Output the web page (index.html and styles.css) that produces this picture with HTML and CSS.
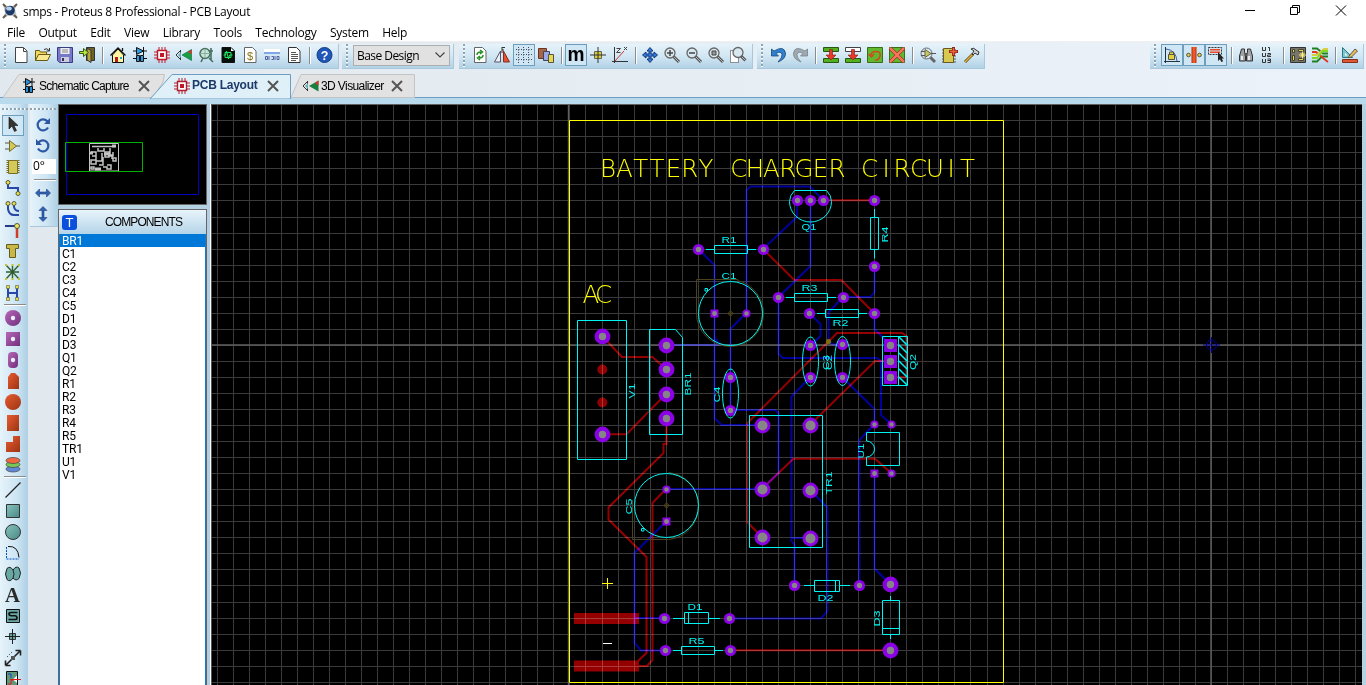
FILE: index.html
```html
<!DOCTYPE html>
<html lang="en">
<head>
<meta charset="utf-8">
<title>smps - Proteus 8 Professional - PCB Layout</title>
<link rel="stylesheet" href="styles.css">
</head>
<body>
<div class="app">
<header class="titlebar">
  <svg class="logo" viewBox="0 0 16 16"><path d="M1 1l4 2h6l4-2-2 5 1 4 1 5-5-2H6l-5 2 2-5-1-4z" fill="#c4c8cc"/><path d="M1 1l3 3M15 1l-3 3M1 15l3-3M15 15l-3-3" stroke="#6a5c48" stroke-width="2"/><circle cx="8" cy="7.500" r="4.800" fill="#1c3a68"/><ellipse cx="7" cy="5.500" rx="2.800" ry="2" fill="#b6cfec"/></svg>
  <span class="title">smps - Proteus 8 Professional - PCB Layout</span>
  <svg class="winctl" viewBox="0 0 120 20" fill="none" stroke="#000"><path d="M4 10.500h10"/><path d="M49.500 7.500h7v7h-7zM51.500 7v-1.500h7v7h-2"/><path d="M95 5.500l10 10M105 5.500l-10 10"/></svg>
</header>
<nav class="menu"><span>File</span><span>Output</span><span>Edit</span><span>View</span><span>Library</span><span>Tools</span><span>Technology</span><span>System</span><span>Help</span></nav>

<div class="toolbars">
  <div class="bar bar-file"><i class="grip"></i>
    <b><svg viewBox="0 0 16 16"><path d="M2.500 .5h8l3.500 3.500v11.500H2.500z" fill="#fff" stroke="#444"/><path d="M10.500 1v3.500h3" fill="none" stroke="#444"/></svg></b>
    <b><svg viewBox="0 0 16 16"><path d="M.5 13.500v-10h4l1 1.500h6v3" fill="#f0d860" stroke="#6a5a10"/><path d="M.5 13.500l3-6h12l-3 6z" fill="#fbe992" stroke="#6a5a10"/><path d="M9 2.500q3-2 5 1M14.500 1v3h-3" fill="none" stroke="#333"/></svg></b>
    <b><svg viewBox="0 0 16 16"><path d="M.5 .5h15v15H2.500l-2-2z" fill="#7878c8" stroke="#3c3c80"/><path d="M3.500 1h9v6h-9z" fill="#eee"/><path d="M5 3h6M5 5h6" stroke="#888"/><path d="M4 10h8v5H4z" fill="#ccd"/><path d="M5 11h2v3H5z" fill="#335"/></svg></b>
    <b><svg viewBox="0 0 16 16"><path d="M7.500 .5h8v13h-8z" fill="#6c6424" stroke="#333"/><path d="M8 1l4 2.500V15.500L8 13z" fill="#b8a838" stroke="#333"/><path d="M.5 4.500h4v-3l5 4-5 4v-3h-4z" fill="#b4e83c" stroke="#385818"/></svg></b>
    <i class="sep"></i>
    <b><svg viewBox="0 0 16 16"><path d="M2.500 8v7.500h11V8L8 2z" fill="#fff8a0" stroke="#111"/><path d="M.5 8.500L8 1l7.500 7.500M12.500 4V1" fill="none" stroke="#111" stroke-width="1.300"/><path d="M5 10h3v5H5z" fill="#b02020"/><path d="M10 10h2v2h-2z" fill="#39c"/></svg></b>
    <b><svg viewBox="0 0 16 16"><path d="M1 4h14M1 11.500h14" stroke="#111"/><path d="M4.500 .5l7 3.500-7 3.500z" fill="#28a0e8" stroke="#111"/><path d="M11.500 0v8" stroke="#111"/><path d="M4.500 8.500h3v6h-3zM8.500 8.500h3v6h-3z" fill="#28a0e8" stroke="#111"/></svg></b>
    <b><svg viewBox="0 0 16 16"><path d="M5 0v16M8 0v16M11 0v16M0 5h16M0 8h16M0 11h16" stroke="#c01828"/><path d="M3.500 3.500h9v9h-9z" fill="#fff" stroke="#c01828" stroke-width="1.400"/><path d="M6 6h4v4H6z" fill="#c01828"/></svg></b>
    <b><svg viewBox="0 0 16 16"><path d="M0 8l5-5M0 8l5 5M4.500 4v8" fill="none" stroke="#333"/><path d="M2 8l3-3v6z" fill="#70b0b8"/><path d="M6 8l9.500-5.500v11z" fill="#18a040" stroke="#064" stroke-width=".6"/><path d="M12 5l3.500-2.500v5z" fill="#e03030"/></svg></b>
    <b><svg viewBox="0 0 16 16"><circle cx="7" cy="6.500" r="5" fill="#c8e4d8" stroke="#487060" stroke-width="1.500"/><path d="M2 6.500h12M7 2v9" stroke="#88b0a0"/><path d="M13 1v12M3 15l2-4M15 15l-4-4M11 4h4" stroke="#487060" stroke-width="1.600"/></svg></b>
    <b><svg viewBox="0 0 16 16"><path d="M2 .5h9l3.500 3.500v11.500H2z" fill="#041008" stroke="#111"/><path d="M3.500 8h2l1-4 2 8 1-4h3M5 5.500h6v5H5z" fill="none" stroke="#20e860"/><path d="M11 1v3h3" fill="#fff"/></svg></b>
    <b><svg viewBox="0 0 16 16"><path d="M2.500 .5h8l3.500 3.500v11.500H2.500z" fill="#fff" stroke="#666"/><text x="5" y="12.500" font-size="11" fill="#887010">$</text></svg></b>
    <b><svg viewBox="0 0 16 16"><path d="M0 2h16v5H0z" fill="#fff"/><path d="M0 5h16v2H0z" fill="#80a8e8"/><path d="M1.500 9.500h2v3h-2zM5 9v4M7.500 9.500h2v3h-2M11 9v4M13 9.500h2v3h-2z" fill="none" stroke="#5060a0"/></svg></b>
    <b><svg viewBox="0 0 16 16"><path d="M2.500 .5h8l3.500 3.500v11.500H2.500z" fill="#fff" stroke="#333"/><path d="M5 5.500h5M5 7.500h7M5 9.500h7M5 11.500h7M5 13.500h5" stroke="#555"/></svg></b>
    <i class="sep"></i>
    <b><svg viewBox="0 0 16 16"><circle cx="7.500" cy="8" r="7.500" fill="#2058b8" stroke="#123a86"/><text x="3.700" y="12.500" font-size="12.500" font-weight="bold" fill="#fff">?</text></svg></b>
  </div>
  <div class="bar bar-design"><i class="grip"></i><div class="combo"><span>Base Design</span><svg viewBox="0 0 10 6"><path d="M.5 .5L5 5 9.500 .5" fill="none" stroke="#444" stroke-width="1.200"/></svg></div></div>
  <div class="bar bar-view"><i class="grip"></i>
    <b><svg viewBox="0 0 16 16"><path d="M2.500 .5h8l3.500 3.500v11.500H2.500z" fill="#fff" stroke="#666"/><path d="M5 8q0-3 4-3M8 3l2.500 2L8 7M11 8q0 3-4 3M8 13l-2.500-2L8 9" fill="none" stroke="#209020" stroke-width="1.500"/></svg></b>
    <b><svg viewBox="0 0 16 16"><path d="M.5 15h6V4z" fill="#e8f0f8" stroke="#556"/><path d="M9.500 4v11h6z" fill="#e85030" stroke="#803020"/><path d="M8 0v6M8 .500h3M8 3h2" stroke="#333" fill="none"/></svg></b>
    <b class="on"><svg viewBox="0 0 16 16"><path d="M2.500 0v16M7.500 0v16M12.500 0v16M0 2.500h16M0 7.500h16M0 12.500h16" stroke="#445" stroke-dasharray="1 1.500"/></svg></b>
    <b><svg viewBox="0 0 16 16"><path d="M.5 1.500h8v10h-8z" fill="#a86448" stroke="#6a3820"/><path d="M5.500 4.500h6v9h-6z" fill="#98a8e8" stroke="#445"/><path d="M10.500 7.500h5v8h-5z" fill="#e8d850" stroke="#554"/></svg></b>
    <i class="sep"></i>
    <b class="on"><svg viewBox="0 0 16 16"><text x="-.5" y="14" font-size="21" font-weight="bold" textLength="17" lengthAdjust="spacingAndGlyphs">m</text></svg></b>
    <b><svg viewBox="0 0 16 16"><path d="M4.500 4.500h7v7h-7z" fill="#d8cc40" stroke="#665"/><path d="M8 0v16M0 8h16" stroke="#333"/></svg></b>
    <b><svg viewBox="0 0 16 16"><path d="M2.500 0v16M0 14.500h16" stroke="#333"/><path d="M3 14L12 4" stroke="#d03030"/><path d="M4.500 1.500h4l-4 4h4M12 0l3 3M15 0l-3 3" fill="none" stroke="#444"/></svg></b>
    <i class="sep"></i>
    <b><svg viewBox="0 0 16 16"><path d="M8 .5l3 3.500H9v3h3V5l3.500 3-3.500 3V9H9v3h2l-3 3.500L5 12h2V9H4v2L.5 8 4 5v2h3V4H5z" fill="#3878d8" stroke="#103878"/></svg></b>
    <b><svg viewBox="0 0 16 16"><path d="M9 9l6 6" stroke="#555" stroke-width="3"/><path d="M10 10l5 5" stroke="#bbb"/><circle cx="6" cy="6" r="5" fill="#d8e8f0" stroke="#666" stroke-width="1.300"/><path d="M3 6h6M6 3v6" stroke="#444" stroke-width="1.500"/></svg></b>
    <b><svg viewBox="0 0 16 16"><path d="M9 9l6 6" stroke="#555" stroke-width="3"/><path d="M10 10l5 5" stroke="#bbb"/><circle cx="6" cy="6" r="5" fill="#d8e8f0" stroke="#666" stroke-width="1.300"/><path d="M3 6h6" stroke="#444" stroke-width="1.500"/></svg></b>
    <b><svg viewBox="0 0 16 16"><path d="M9 9l6 6" stroke="#555" stroke-width="3"/><path d="M10 10l5 5" stroke="#bbb"/><circle cx="6" cy="6" r="5" fill="#d8e8f0" stroke="#666" stroke-width="1.300"/><path d="M4 4h4v4H4z" fill="#999" stroke="#444"/></svg></b>
    <b><svg viewBox="0 0 16 16"><path d="M.5 3.500h8v12h-8z" fill="#fff" stroke="#333" stroke-dasharray="1 1"/><path d="M11 9l4.500 4.500" stroke="#555" stroke-width="3"/><path d="M12 10l4 4" stroke="#bbb"/><circle cx="8" cy="5.500" r="5" fill="#d8e8f0" stroke="#666" stroke-width="1.300"/></svg></b>
  </div>
  <div class="bar bar-edit"><i class="grip"></i>
    <b><svg viewBox="0 0 16 16"><path d="M1.500 2v7h7L6 6.500q5-3 6 1 .5 3-4 7.500 8-3 7.500-9Q14-2 4 4z" fill="#3080d0" stroke="#184878" stroke-width=".8"/></svg></b>
    <b><svg viewBox="0 0 16 16"><path d="M15.500 2v7h-7L11 6.500q-5-3-6 1-.5 3 4 7.500-8-3-7.500-9Q3-2 13 4z" fill="#a0a8b0" stroke="#78828a" stroke-width=".8"/></svg></b>
    <i class="sep"></i>
    <b><svg viewBox="0 0 16 16"><path d="M.5 .5h15v4H.5zM.5 11.500h15v4H.5z" fill="#50b020" stroke="#285810"/><path d="M6.500 2.500h3V8H13l-5 5-5-5h3.500z" fill="#e83828" stroke="#801818" stroke-width=".6"/></svg></b>
    <b><svg viewBox="0 0 16 16"><path d="M.5 .5h15v4H.5z" fill="#fff" stroke="#444"/><path d="M.5 11.500h15v4H.5z" fill="#50b020" stroke="#285810"/><path d="M6.500 2.500h3V8H13l-5 5-5-5h3.500z" fill="#e83828" stroke="#801818" stroke-width=".6"/></svg></b>
    <b><svg viewBox="0 0 16 16"><path d="M.5 .5h15v15H.5z" fill="#62b82c" stroke="#387018"/><path d="M4 8.500q0-4 5-4t4 4.500-5 4M1.500 7l3 3 2.500-3" fill="none" stroke="#d04820" stroke-width="1.500"/></svg></b>
    <b><svg viewBox="0 0 16 16"><path d="M.5 .5h15v15H.5z" fill="#62b82c" stroke="#387018"/><path d="M1 1l14 14M15 1L1 15" stroke="#801818" stroke-width="3.500"/><path d="M1 1l14 14M15 1L1 15" stroke="#f8745c" stroke-width="2.500"/></svg></b>
    <i class="sep"></i>
    <b><svg viewBox="0 0 16 16"><path d="M10 10l5 5" stroke="#666" stroke-width="3"/><circle cx="6.500" cy="6.500" r="5.500" fill="#d8e8f0" stroke="#667"/><path d="M5 2.500l6 4-6 4z" fill="#c8c860" stroke="#664"/><path d="M1 4.500h4M1 8.500h4M11 6.500h5" stroke="#555"/></svg></b>
    <b><svg viewBox="0 0 16 16"><path d="M0 3h14M0 6h14M0 9h14M0 12h14M0 15h14" stroke="#555"/><path d="M1.500 1.500h10v14h-10z" fill="#d8c850" stroke="#665a20"/><path d="M11.500 0v9M7 4.500h9" stroke="#902818" stroke-width="3"/><path d="M11.500 1v7M8 4.500h7" stroke="#f06040" stroke-width="1.400"/></svg></b>
    <b><svg viewBox="0 0 16 16"><path d="M1 15L9 7" stroke="#6a5010" stroke-width="3"/><path d="M1 15L9 7" stroke="#e0b040" stroke-width="1.500"/><path d="M7 2q3-2 5 1l3 2-1 3-3-2-2 2-1-1 2-3z" fill="#d0d4d8" stroke="#333"/></svg></b>
  </div>
  <div class="bar bar-mode"><i class="grip"></i>
    <b class="on"><svg viewBox="0 0 16 16"><path d="M1.500 0v16M0 14.500h16" stroke="#234"/><path d="M2 2q10 1 11 12" fill="none" stroke="#4060a0"/><path d="M4.500 7.500h6v5h-6zM5.500 7V5h4v2" fill="#e0d040" stroke="#554"/></svg></b>
    <b class="on"><svg viewBox="0 0 16 16"><path d="M8 0v16" stroke="#b03010" stroke-width="5"/><path d="M8 0v16" stroke="#f05828" stroke-width="3"/><circle cx="2.500" cy="8" r="1.800" fill="#e0d040" stroke="#554"/><circle cx="13.500" cy="8" r="1.800" fill="#e0d040" stroke="#554"/></svg></b>
    <b class="on"><svg viewBox="0 0 16 16"><path d="M.5 .5h13v7H.5z" fill="none" stroke="#333" stroke-dasharray="2 1"/><path d="M2 2h10v1.500H2zM2 4.500h10V6H2z" fill="#e84828"/><path d="M10 5v9l2-1.800 1.300 2.800 1.800-.8-1.300-2.800H16z" fill="#222"/></svg></b>
    <i class="sep"></i>
    <b><svg viewBox="0 0 16 16"><path d="M3.500 2h3v3l1 3v6h-6V9zM9.500 2h3l2 7v5h-6V8l1-3z" fill="#a0a4a8" stroke="#333"/><path d="M6.500 6h3v3h-3z" fill="#555"/><path d="M3 9h2v4H3zM10 9h2v4h-2z" fill="#e8ecf0"/></svg></b>
    <b><svg class="shift" viewBox="0 0 16 16" fill="none" stroke="#333"><path d="M.5 0v3.500h3V0M.5 6v3.500h3V6M.5 12v3.500h3V12M6 .5h1.500v3.500M5.500 6.500h3v1.500h-3v1.500h3.500M5.500 12h3v1.500h-3M8.500 13.500v2h-3"/></svg></b>
    <i class="sep"></i>
    <b><svg viewBox="0 0 16 16"><path d="M.5 .5h15v15H.5z" fill="#777468" stroke="#333"/><path d="M2.500 2.500h2v3h-2zM2.500 8.500h2v5h-2zM8.500 2.500h5v2h-5zM8.500 11.500h5v2h-5z" fill="#e0d450" stroke="#443"/><path d="M12.500 4.500v7M9 8h7M10.500 6l4 4M14.500 6l-4 4" stroke="#fff080"/></svg></b>
    <b><svg viewBox="0 0 16 16" fill="none" stroke-width="1.800"><path d="M0 1.500h5l6 5h5M0 14.500h5l5-5h6" stroke="#208020"/><path d="M0 5h4l7 6 5 4" stroke="#e03820"/><path d="M16 2h-4L5 8H0" stroke="#d8d040"/><path d="M0 11h5l6-7h5" stroke="#80d820"/></svg></b>
    <i class="sep"></i>
    <b><svg viewBox="0 0 16 16"><path d="M.5 .5v10h10z" fill="#80c8c8" stroke="#287888"/><path d="M3 6v2.500h2.500z" fill="#fff"/><path d="M7 9l6-7 2.500 2-6 6-3 .8z" fill="#e0c060" stroke="#654"/><path d="M.5 12.500h15v3H.5z" fill="#e05830" stroke="#80301c"/></svg></b>
  </div>
</div>

<div class="tabs">
  <div class="tab tab-sch"><svg class="shape" viewBox="0 0 165 24"><path d="M0 23.500L16 .5H161.500L160 8 150 23.500z" fill="#e2e2e2" stroke="#c4c4c4"/></svg>
    <svg class="ti" viewBox="0 0 16 16"><path d="M2 4h12M2 11.500h12" stroke="#111"/><path d="M4.500 .5l6 3.500-6 3.500z" fill="#2890d8" stroke="#111"/><path d="M11 0v8" stroke="#111"/><path d="M4.500 8.500h3v6h-3zM8.500 8.500h3v6h-3z" fill="#2890d8" stroke="#111"/></svg><span>Schematic Capture</span><svg class="x" viewBox="0 0 12 12"><path d="M1 1l10 10M11 1L1 11"/></svg></div>
  <div class="tab tab-pcb"><svg class="shape" viewBox="0 0 142 25"><path d="M0 25L22 .5H140.500V25z" fill="#dff0f9" stroke="#6d9ec2"/></svg>
    <svg class="ti" viewBox="0 0 16 16"><path d="M5 0v16M8 0v16M11 0v16M0 5h16M0 8h16M0 11h16" stroke="#b02030"/><path d="M3.500 3.500h9v9h-9z" fill="#fff" stroke="#b02030" stroke-width="1.400"/><path d="M6 6h4v4H6z" fill="#c01828"/></svg><span>PCB Layout</span><svg class="x" viewBox="0 0 12 12"><path d="M1 1l10 10M11 1L1 11"/></svg></div>
  <div class="tab tab-3d"><svg class="shape" viewBox="0 0 124 24"><path d="M0 23.500L10 .5H123.500V23.500z" fill="#e2e2e2" stroke="#c4c4c4"/></svg>
    <svg class="ti" viewBox="0 0 16 16"><path d="M0 8l5-5M0 8l5 5M4.500 4v8" fill="none" stroke="#333"/><path d="M2 8l3-3v6z" fill="#70b0b8"/><path d="M6 8l9.500-5.500v11z" fill="#18803c"/><path d="M12 5l3.500-2.500v5z" fill="#e03030"/></svg><span>3D Visualizer</span><svg class="x" viewBox="0 0 12 12"><path d="M1 1l10 10M11 1L1 11"/></svg></div>
</div>
<div class="strip"></div>

<main class="work">
  <aside class="tools"><i class="hgrip"></i>
    <b class="on"><svg viewBox="0 0 16 16"><path d="M4 0v12l3-3 2.500 5.500 2-1L9 8.500h4z" fill="#333" stroke="#111" stroke-width=".6"/></svg></b>
    <b><svg viewBox="0 0 16 16"><path d="M0 5h5M0 11h5M11 8h4" stroke="#554"/><path d="M4.500 2.500l7 5.500-7 5.500z" fill="#d4c858" stroke="#776c28"/></svg></b>
    <b><svg viewBox="0 0 16 16"><path d="M2.500 1v14M13.500 1v14" stroke="#776c28" stroke-width="2" stroke-dasharray="1 1"/><path d="M3.500 1.500h9v13h-9z" fill="#d4c858" stroke="#776c28"/></svg></b>
    <b><svg viewBox="0 0 16 16"><path d="M3 2v6h10v5" fill="none" stroke="#2848a8" stroke-width="2"/><circle cx="3" cy="2.500" r="2" fill="#e8e040" stroke="#554"/><circle cx="13" cy="13.500" r="2" fill="#e8e040" stroke="#554"/></svg></b>
    <b><svg viewBox="0 0 16 16"><path d="M3 3v5q1 6 6 6h5M9 3v3q1 4 5 4" fill="none" stroke="#2848a8" stroke-width="2"/><circle cx="3" cy="2.500" r="2" fill="#e8e040" stroke="#554"/><circle cx="9" cy="2.500" r="2" fill="#e8e040" stroke="#554"/></svg></b>
    <b><svg viewBox="0 0 16 16"><path d="M0 4h12" stroke="#223888" stroke-width="2"/><path d="M12 4v12" stroke="#d04020" stroke-width="2.500"/><circle cx="12" cy="4" r="2.500" fill="#e8e860" stroke="#554"/></svg></b>
    <b><svg viewBox="0 0 16 16"><path d="M1.500 1.500h12v4h-3v9h-6v-9h-3z" fill="#c8b848" stroke="#665c20"/></svg></b>
    <b><svg viewBox="0 0 16 16"><path d="M1 1l13 14M14 1L1 15M1 8h13M7.500 2v12" stroke="#306030" stroke-width="1.400"/><path d="M0 0h2v2H0zM6.500 0h2v2h-2zM13 0h2v2h-2zM0 14h2v2H0zM6.500 14h2v2h-2zM13 14h2v2h-2z" fill="#c8c030"/></svg></b>
    <b><svg viewBox="0 0 16 16"><path d="M3 3v11M12 3v11M3 8h9" fill="none" stroke="#2848a8" stroke-width="2"/><path d="M1.500 .500h3v3h-3zM10.500 .500h3v3h-3zM1.500 12.500h3v3h-3zM10.500 12.500h3v3h-3z" fill="#e8e040" stroke="#554" stroke-width=".6"/></svg></b>
    <i class="hsep"></i>
    <b><svg viewBox="0 0 16 16"><circle cx="8" cy="8" r="8" fill="url(#gp)"/><circle cx="8" cy="8" r="2.200" fill="#e8f0f8"/></svg></b>
    <b><svg viewBox="0 0 16 16"><path d="M1 1h14v14H1z" fill="url(#gp)"/><circle cx="8" cy="8" r="2.200" fill="#e8f0f8"/></svg></b>
    <b><svg viewBox="0 0 16 16"><rect x="3" width="10" height="16" rx="4" fill="url(#gp)"/><circle cx="8" cy="8" r="2.200" fill="#e8f0f8"/></svg></b>
    <b><svg viewBox="0 0 16 16"><path d="M3 16V4l3-4h4l4 4v12z" fill="url(#gr)"/></svg></b>
    <b><svg viewBox="0 0 16 16"><circle cx="8" cy="8" r="8" fill="url(#gr)"/></svg></b>
    <b><svg viewBox="0 0 16 16"><path d="M2 0h12v16H2z" fill="url(#gr)"/></svg></b>
    <b><svg viewBox="0 0 16 16"><path d="M1 6h7V0h7v16H1z" fill="url(#gr)"/></svg></b>
    <b><svg viewBox="0 0 16 16" stroke="#444" stroke-width=".7"><ellipse cx="8" cy="12" rx="7" ry="3" fill="#6088d8"/><ellipse cx="8" cy="7.500" rx="7" ry="3" fill="#78c858"/><ellipse cx="8" cy="3.500" rx="7" ry="3" fill="#f06840"/></svg></b>
    <i class="hsep"></i>
    <b><svg viewBox="0 0 16 16"><path d="M.5 15.500l15-15" stroke="#222" stroke-width="1.300"/></svg></b>
    <b><svg viewBox="0 0 16 16"><path d="M1.500 1.500h13v13h-13z" fill="url(#gt)" stroke="#333"/></svg></b>
    <b><svg viewBox="0 0 16 16"><circle cx="8" cy="8" r="7.500" fill="url(#gt)" stroke="#333"/></svg></b>
    <b><svg viewBox="0 0 16 16" fill="none"><path d="M1.500 2v12H14" stroke="#0050c8" stroke-dasharray="2 1"/><path d="M3 1.500q10-1 11 11" stroke="#111"/></svg></b>
    <b><svg viewBox="0 0 16 16"><path d="M8 4q3-4.500 6-2 3 5 0 10.500-3 3-6-.5-3 4.500-6 1.500Q-1 8 2 2.500q3-3 6 1.500z" fill="#68a8a4" stroke="#222"/><path d="M8 4q2 4 0 8" fill="none" stroke="#222"/></svg></b>
    <b><svg viewBox="0 0 16 16"><text x="0" y="15" font-size="21" font-weight="bold" class="serif" textLength="15" lengthAdjust="spacingAndGlyphs" fill="#2a2a2a">A</text></svg></b>
    <b><svg viewBox="0 0 16 16"><path d="M1.500 1.500h13v13h-13z" fill="#68a8a4" stroke="#111"/><path d="M12.500 4.500H6q-2 0-2 1.500t2 1.750h4q2 .25 2 2t-2 1.750H3.500" fill="none" stroke="#111" stroke-width="1.700"/></svg></b>
    <b><svg viewBox="0 0 16 16"><path d="M4.500 4.500h6v6h-6z" fill="#68a8a4" stroke="#333"/><path d="M7.500 0v15M0 7.500h15" stroke="#222"/></svg></b>
    <b><svg viewBox="0 0 16 16"><path d="M1 15L15 1M15.500 .500v5M15.500 .500h-5M.5 15.500v-5M.5 15.500h5" stroke="#222" stroke-width="1.600"/><path d="M2 7l6-6" stroke="#222" stroke-dasharray="1 2"/><path d="M6 6h4v4H6z" fill="#555"/></svg></b>
    <b><svg viewBox="0 0 16 16"><path d="M1.500 .5h11v15h-11z" fill="#609878" stroke="#111"/><path d="M3 3h3v4" fill="none" stroke="#1040d0"/><path d="M3 13h3v-4h4" fill="none" stroke="#e01818"/><path d="M12 4.500L8 8.500l4 3.500" fill="#fff"/><path d="M5 8.500h11" stroke="#e01818"/></svg></b>
  </aside>
  <aside class="side">
    <div class="rotate"><i class="hgrip"></i>
      <svg viewBox="0 0 16 16"><path d="M12.500 4.500a5.500 5.500 0 1 0 .5 6" fill="none" stroke="#2c58a4" stroke-width="2.200"/><path d="M15 1v6H9z" fill="#2c58a4"/></svg>
      <svg viewBox="0 0 16 16"><path d="M3.500 4.500a5.500 5.500 0 1 1-.5 6" fill="none" stroke="#2c58a4" stroke-width="2.200"/><path d="M1 1v6h6z" fill="#2c58a4"/></svg>
      <div class="angle">0°</div><i class="hsep"></i>
      <svg viewBox="0 0 16 16"><path d="M.5 8l4-4v3h7V4l4 4-4 4V9h-7v3z" fill="#3060b0" stroke="#204080" stroke-width=".6"/></svg>
      <svg viewBox="0 0 16 16"><path d="M8 .5l4 4H9v7h3l-4 4-4-4h3v-7H4z" fill="#3060b0" stroke="#204080" stroke-width=".6"/></svg>
    </div>
  </aside>
  <section class="panel">
    <svg class="overview" viewBox="58 104 149 101"><path d="M58 104h149v101H58z" fill="#666"/><path d="M59 105h147v99H59z"/><path d="M66.500 114.500h132v80h-132z" fill="none" stroke="#0000c0"/>
      <g fill="none" stroke="#c4c4c4"><path d="M89.500 143.500h29v27.500h-29z"/><path stroke-width="1.500" d="M92 146.500h24M91 152h5v4h-4M98 148v3h6v-3M105 152h4v5h-4zM110 148v8h3v-4M96 154v7h6v-8M91 160h5v4h-5zM103 157v8h-4M108 155h4v4M113 158h3v3h-3zM103 167h4v2h4v-4h-4M91 167h3v2h-3z"/><path d="M95 169h6M112 146h4M104 154h5M90 153h3" stroke-width="3"/></g>
      <path d="M65.500 142.500h77v29h-77z" fill="none" stroke="#00b400"/></svg>
    <div class="comp">
      <div class="comp-head"><span class="t">T</span><span class="name">COMPONENTS</span></div>
      <ul><li class="sel">BR1</li><li>C1</li><li>C2</li><li>C3</li><li>C4</li><li>C5</li><li>D1</li><li>D2</li><li>D3</li><li>Q1</li><li>Q2</li><li>R1</li><li>R2</li><li>R3</li><li>R4</li><li>R5</li><li>TR1</li><li>U1</li><li>V1</li></ul>
    </div>
  </section>
  <div class="split"></div>
  <svg class="board" viewBox="212 104 1150 581">
    <defs>
      <linearGradient id="gp" x2="1" y2="1"><stop stop-color="#b868b8"/><stop offset="1" stop-color="#70307c"/></linearGradient>
      <linearGradient id="gr" x2="1" y2="1"><stop stop-color="#e85c30"/><stop offset="1" stop-color="#9c3414"/></linearGradient>
      <linearGradient id="gt" x2="1" y2="1"><stop stop-color="#88c4c0"/><stop offset="1" stop-color="#488884"/></linearGradient>
      <g id="pl"><circle r="7.900" fill="#8c00e6"/><circle r="3.700" fill="#858585"/></g>
      <g id="px"><circle r="7.900" fill="#8c00e6"/><circle r="5" fill="#858585"/></g>
      <g id="pm"><circle r="5.600" fill="#8c00e6"/><circle r="2.700" fill="#858585"/></g>
      <g id="ps"><circle r="4.100" fill="#8c00e6"/><circle r="2.200" fill="#858585"/></g>
      <g id="pq"><path d="M-4-4h8v8h-8z" fill="#8c00e6"/><circle r="2.400" fill="#858585"/></g>
      <g id="pb"><path d="M-6.500-6.500h13v13h-13z" fill="#8c00e6"/><circle r="3.700" fill="#858585"/></g>
    </defs>
    <path d="M212 104h1150v581H212z"/>
    <path d="M212 104h1150" stroke="#606060" stroke-width="2"/>
    <g class="grid">
      <path d="M217 395h369M602 395h369M987 395h375" stroke-width="580" stroke-dasharray="1 15"/>
      <path d="M787 120v81M787 217v369M787 602v83" stroke-width="1150" stroke-dasharray="1 15"/>
    </g>
    <path class="axis" d="M212 345h1150M1211 105v580M568.500 105v580"/>
    <g class="blue">
      <path d="M746.500 313V190.500l4-4H810L823 200M797 200v17L763 249M810.500 200v66L778.500 297v56.500l4 4.500H877l4 3v54l10 9M698 249l16.500 16v153l7 7H762M666 345h54l-5.500-8M746 313l-15.500 16v81H775l3.500 3v60L762 489M874.500 266v26l-4 5H843l-14.500 15.500V340l4 4.500h10M809 313l11.500 11v12L810 346M874.500 313v16l16 16M810 377.500L791.500 396.500V541l3 3.500V585M791 538h19M842 377l32.500 32v15L859.500 440V585M874.500 473v95.500L890 584M666 489h96M810 490l17.500 17.500V611l-6.500 7.500H729M666 521.500L634.500 553v90l6.500 7.500h24M634 618h30"/>
    </g>
    <g class="red">
      <path d="M823 200.300h51M763 249l31.300 31h47L874 313M602 336l20 21h30.500L666 369M602 434.300h24.500L666 394M666.500 418v26h-3v9L608.500 507.500v12L646.500 557v96L638 661M666 489L652.500 503v157l-5.500 6H638M891 377.300h15.300V336l-4-3H837L747.500 423v99.500L762 537M810 425l65-64h15M762 489l31.300-30.300H875L891 473M730 650.300h160"/>
      <path d="M574 618.500h65M574 666h65" stroke-width="11"/>
      <circle cx="602.300" cy="369.500" r="5"/><circle cx="602.300" cy="402.500" r="5"/>
    </g>
    <g class="dim"><path d="M738 279.500h-41.500v34M696.500 313a34 33 0 0 0 34 33.500 33 33 0 0 0 33-33 34 34 0 0 0-26-33M632.500 500v39.500h36a32.500 33 0 0 0 30-34 33 33 0 0 0-30-33M730.500 310v7M727 313.500h7M666.500 502v7M663 505.500h7"/><circle cx="730.500" cy="313.500" r="2"/><circle cx="666.500" cy="505.500" r="2"/></g>
    <circle cx="828.500" cy="341.500" r="2.600" fill="#7c700c"/>
    <g>
      <use href="#pm" x="698.500" y="249.500"/><use href="#pm" x="763.500" y="249.500"/><use href="#pm" x="797.500" y="200.500"/><use href="#pm" x="810.500" y="200.500"/><use href="#pm" x="823.500" y="200.500"/><use href="#pm" x="874.500" y="200.500"/><use href="#pm" x="874.500" y="266.500"/><use href="#pm" x="778.500" y="297.500"/><use href="#pm" x="843.500" y="297.500"/><use href="#pm" x="809.500" y="313.500"/><use href="#pm" x="874.500" y="313.500"/><use href="#pm" x="730.500" y="377.500"/><use href="#pm" x="730.500" y="410.500"/><use href="#pm" x="810.500" y="345.500"/><use href="#pm" x="810.500" y="377.500"/><use href="#pm" x="842.500" y="344.500"/><use href="#pm" x="842.500" y="377.500"/><use href="#pm" x="664.500" y="618.500"/><use href="#pm" x="729.500" y="618.500"/><use href="#pm" x="665.500" y="650.500"/><use href="#pm" x="730.500" y="650.500"/><use href="#pm" x="794.500" y="585.500"/><use href="#pm" x="859.500" y="585.500"/>
      <use href="#pl" x="602.500" y="336.500"/><use href="#pl" x="602.500" y="434.500"/><use href="#pl" x="666.500" y="345.500"/><use href="#pl" x="666.500" y="369.500"/><use href="#pl" x="666.500" y="394.500"/><use href="#pl" x="666.500" y="418.500"/><use href="#pl" x="890.500" y="584.500"/><use href="#pl" x="890.500" y="650.500"/>
      <use href="#px" x="762.500" y="425.500"/><use href="#px" x="810.500" y="425.500"/><use href="#px" x="762.500" y="489.500"/><use href="#px" x="810.500" y="490.500"/><use href="#px" x="762.500" y="537.500"/><use href="#px" x="810.500" y="538.500"/>
      <use href="#ps" x="746.500" y="313.500"/><use href="#ps" x="666.500" y="489.500"/><use href="#ps" x="874.500" y="424.500"/><use href="#ps" x="891.500" y="424.500"/><use href="#ps" x="891.500" y="473.500"/>
      <use href="#pq" x="714.500" y="313.500"/><use href="#pq" x="666.500" y="521.500"/><use href="#pq" x="874.500" y="473.500"/>
      <use href="#pb" x="890.500" y="345.500"/><use href="#pb" x="890.500" y="361.500"/><use href="#pb" x="890.500" y="377.500"/>
    </g>
    <g class="silk">
      <path d="M706 249.500h8.500M747.500 249.500h8.500M714.500 245.500h33v8h-33zM786 297.500h8.500M827.500 297.500h8.500M794.500 293.500h33v8h-33zM817 313.500h8.500M858.500 313.500h8.500M825.500 309.500h33v8h-33zM874.500 209v8.500M874.500 249.500v9M870.500 217.500h8v32h-8zM673 650.500h8.500M714.500 650.500h8.500M681.500 646.500h33v8h-33z"/>
      <path d="M673 618.500h11.500M708.500 618.500h11.500M684.500 612.500h24v11h-24zM688.500 612.500v11M804 585.500h10.500M839.500 585.500h10.500M814.500 580.500h25v11h-25zM835.500 580.500v11M890.500 596v4.500M890.500 634.500v4.500M882.500 600.500h17v34h-17zM882.500 628.500h17"/>
      <path d="M577.500 320.500h49v139h-49zM649.500 329.500h26l7 8v97h-33zM749.500 415.500h73v132h-73zM882.500 336.500h25v49h-25zM898.500 336.500v49"/>
      <path d="M899 337l8 8M899 345l8 8M899 353l8 8M899 361l8 8M899 369l8 8M899 377l8 8" stroke-width="1.500"/>
      <path d="M866.500 441v-8.500h33v33h-33v-8.500M866.500 441a8 8 0 0 1 0 16M794.500 190.500h32q5 5 5 11a21 20.500 0 0 1-42 0q0-6 5-11zM705 288.500h2.500v2.500h-2.500zM641.500 528.500h2.500v2.500h-2.500z"/>
      <circle cx="730.500" cy="313.500" r="32"/><circle cx="666.500" cy="505.500" r="32"/><ellipse cx="730.500" cy="393.500" rx="8" ry="24.500"/><ellipse cx="810.500" cy="361.500" rx="8" ry="24.500"/><ellipse cx="842.500" cy="361" rx="8" ry="24.500"/>
    </g>
    <path d="M569.500 120.500h434v562h-434z" fill="none" stroke="#ff0"/>
    <g class="big"><text y="177" x="608 624.400 640.700 657 673.400 689.700 706 722.400 738.800 755 771.500 787.800 804 820.500 837 853 869.500 886 902 918.500 935 951 967.500">BATTERY CHARGER CIRCUIT</text><text x="591 603.500" y="303">AC</text></g>
    <path d="M602 583.500h11M607.500 578v11" stroke="#ff0"/><path d="M603 643.500h9" stroke="#fff"/>
    <g class="ref">
      <text x="721.500" y="243" textLength="15" lengthAdjust="spacingAndGlyphs">R1</text><text x="721.500" y="279" textLength="15" lengthAdjust="spacingAndGlyphs">C1</text><text x="801.500" y="230" textLength="15" lengthAdjust="spacingAndGlyphs">Q1</text><text x="801.500" y="291" textLength="16" lengthAdjust="spacingAndGlyphs">R3</text><text x="832.500" y="326" textLength="16" lengthAdjust="spacingAndGlyphs">R2</text><text x="687.500" y="610" textLength="15" lengthAdjust="spacingAndGlyphs">D1</text><text x="688.500" y="644" textLength="16" lengthAdjust="spacingAndGlyphs">R5</text><text x="817.500" y="601" textLength="16" lengthAdjust="spacingAndGlyphs">D2</text>
      <text transform="translate(888 242.500) rotate(-90)" textLength="16" lengthAdjust="spacingAndGlyphs">R4</text><text transform="translate(635 398.500) rotate(-90)" textLength="15" lengthAdjust="spacingAndGlyphs">V1</text><text transform="translate(691 395.500) rotate(-90)" textLength="23" lengthAdjust="spacingAndGlyphs">BR1</text><text transform="translate(720 402.500) rotate(-90)" textLength="16" lengthAdjust="spacingAndGlyphs">C4</text><text transform="translate(829 370) rotate(-90)" textLength="15" lengthAdjust="spacingAndGlyphs">C3</text><text transform="translate(832 370) rotate(-90)" textLength="15" lengthAdjust="spacingAndGlyphs">C2</text><text transform="translate(916 370) rotate(-90)" textLength="16" lengthAdjust="spacingAndGlyphs">Q2</text><text transform="translate(864 458.500) rotate(-90)" textLength="15" lengthAdjust="spacingAndGlyphs">U1</text><text transform="translate(832 494.500) rotate(-90)" textLength="23" lengthAdjust="spacingAndGlyphs">TR1</text><text transform="translate(632 514.500) rotate(-90)" textLength="16" lengthAdjust="spacingAndGlyphs">C5</text><text transform="translate(880 626.500) rotate(-90)" textLength="16" lengthAdjust="spacingAndGlyphs">D3</text>
    </g>
    <g fill="none" stroke="#000090"><circle cx="1211.500" cy="345" r="5"/><path d="M1203 345h17M1211.500 337v16"/></g>
  </svg>
</main>
</div>
</body>
</html>
```
FILE: styles.css
```css
* { box-sizing: border-box; }
body { margin: 0; font-family: "Liberation Sans", Arial, sans-serif; color: #000; }
.app { display: flex; flex-direction: column; width: 1366px; height: 685px; overflow: hidden; background: #e4ebf2; }
svg { display: block; }
b, i { display: block; font-style: normal; font-weight: normal; }

.titlebar { display: flex; align-items: center; height: 24px; background: #fff; padding-left: 2px; }
.logo { width: 16px; height: 16px; margin-right: 5px; margin-top: -3px; }
.title { font: 12px "Open Sans", "Noto Sans", sans-serif; letter-spacing: -.28px; flex: 1; margin-top: -2px; }
.winctl { width: 120px; height: 20px; margin-right: 5px; margin-top: -4px; }
.menu { display: flex; gap: 13.5px; height: 17px; padding-left: 7px; background: #fff; font: 12px/17px "Open Sans", "Noto Sans", sans-serif; letter-spacing: -.27px; }

.toolbars { display: flex; height: 28px; padding-top: 2px; border-top: 1px solid #f0f0f0; background: linear-gradient(90deg, #e1e8ee, #ebf2f9); }
.bar { display: flex; align-items: center; height: 25px; padding-bottom: 2px; background: linear-gradient(#e6f3fa, #d2e7f4 50%, #b2d2e6); border-right: 1px solid #a9c8dc; border-bottom: 1px solid #a9c8dc; }
.bar-file { width: 339px; margin-right: 3px; }
.bar-design { width: 112px; margin-right: 5px; }
.bar-view { width: 294px; margin-right: 4px; }
.bar-edit { width: 228px; }
.bar-mode { width: 214px; margin-left: auto; margin-right: 2px; }
.bar b { width: 22px; height: 22px; padding: 3px; flex: none; }
.bar b svg, .tools b svg { width: 16px; height: 16px; overflow: visible; }
.bar .shift { margin-left: 2px; }
.bar .on, .tools .on { border: 1px solid #6d9ebd; background: #cfe6f4; padding: 2px; }
.grip { width: 10px; height: 24px; flex: none; background: repeating-linear-gradient(#8fa3b0 0 2px, #fff 2px 3px, transparent 3px 4px) 4px 1px / 2px 100% no-repeat; }
.bar-design .grip, .bar-mode .grip { width: 11px; }
.sep { width: 8px; height: 17px; flex: none; background: linear-gradient(90deg, #8c8c8c 50%, #fff 50%) 4px 0 / 2px 100% no-repeat; }
.bar-file .sep, .bar-edit .sep { width: 9px; }
.combo { display: flex; align-items: center; justify-content: space-between; width: 97px; height: 21px; border: 1px solid #adadad; background: #e1e1e1; padding: 0 4px 0 3px; font: 12px "Open Sans", sans-serif; letter-spacing: -.55px; }
.combo svg { width: 10px; height: 6px; }

.tabs { display: flex; height: 28px; padding: 5px 0 0 3px; background: linear-gradient(90deg, #e1e8ee, #ebf2f9); }
.tab { position: relative; display: flex; align-items: center; height: 23px; font-size: 12px; white-space: nowrap; }
.tab .shape { position: absolute; left: 0; top: 0; z-index: 0; }
.tab > * { position: relative; z-index: 1; }
.tab span { flex: 1; letter-spacing: -.6px; }
.ti { width: 16px; height: 16px; }
.x { width: 12px; height: 12px; stroke: #555; stroke-width: 2; }
.tab-sch { width: 147px; padding: 0 0 0 18px; }
.tab-sch .shape { width: 165px; height: 24px; }
.tab-sch span { padding-left: 2px; letter-spacing: -.72px; }
.tab-pcb { width: 141px; padding: 0 12px 0 24px; z-index: 2; }
.tab-pcb .shape { width: 142px; height: 25px; }
.tab-pcb span { font-weight: bold; color: #1c3a6a; padding: 0 0 2px 2px; letter-spacing: -.25px; }
.tab-3d { width: 124px; padding: 0 12px 0 12px; }
.tab-3d .shape { width: 124px; height: 24px; }
.tab-3d span { padding-left: 2px; }
.strip { height: 7px; background: #b9daec; border-top: 1px solid #6d9ec2; }

.work { display: flex; height: 581px; background: #b4d2e4; }
.tools { width: 28px; flex: none; padding-left: 2px; background: linear-gradient(90deg, #e6f3fa, #cde5f3 60%, #aecfe4); }
.tools b { width: 22px; height: 21px; padding: 2px 3px 3px; }
.tools .on { padding: 1px 2px; }
.hgrip { height: 11px; width: 100%; background: repeating-linear-gradient(90deg, #8fa3b0 0 2px, #fff 2px 3px, transparent 3px 4px) 0 4px / 100% 2px no-repeat; }
.hsep { height: 4px; width: 22px; border-top: 1px solid #8c8c8c; box-shadow: inset 0 1px #fff; margin-left: 2px; margin-right: -2px; }
.side { width: 30px; flex: none; background: #e1e9ef; padding-left: 2px; }
.rotate { display: flex; flex-direction: column; align-items: center; height: 123px; padding-right: 2px; background: linear-gradient(90deg, #e6f3fa, #cde5f3 60%, #aecfe4); border-bottom: 1px solid #a9c8dc; }
.rotate svg { width: 16px; height: 16px; margin: 2px 0 3px; }
.angle { width: 24px; height: 15px; background: #fff; font: 12px/13px "Open Sans", sans-serif; margin: 2px -2px 5px 0; padding-left: 1px; }
.panel { display: flex; flex-direction: column; width: 149px; flex: none; }
.overview { width: 149px; height: 101px; flex: none; }
.comp { flex: 1; margin-top: 4px; border: 1px solid #666; border-bottom: 0; background: #fff; }
.comp-head { display: flex; align-items: center; height: 24px; padding-left: 3px; background: linear-gradient(#e8f4fb, #b4d4e8); }
.comp-head .t { width: 15px; height: 15px; border-radius: 3px; background: #0a50dc; color: #fff; font-size: 13px; line-height: 16px; text-align: center; }
.comp-head .name { flex: 1; padding-left: 4px; text-align: center; font-size: 12px; letter-spacing: -.9px; word-spacing: 0; }
.comp ul { margin: 0; padding: 0; height: 455px; border: 1px solid #1a78c8; border-width: 0 1px; list-style: none; font: 12px/14px Roboto, sans-serif; letter-spacing: -.2px; }
.comp li { height: 13px; padding-left: 2px; }
.comp .sel { background: #0078d7; color: #fff; }
.split { width: 5px; flex: none; background: linear-gradient(90deg, #b0cfe2 60%, #fff 60% 80%, #555 80%); }
.board { width: 1150px; height: 581px; flex: none; }

.serif { font-family: "Liberation Serif", serif; }
.grid { stroke: #3a3a3a; fill: none; shape-rendering: crispEdges; }
.axis { stroke: #606060; stroke-width: 1.400; fill: none; }
.blue, .red { fill: none; stroke-width: 2; mix-blend-mode: screen; }
.blue { stroke: #00009c; }
.red { stroke: #940000; }
.red circle { fill: #900000; stroke: none; }
.dim { fill: none; stroke: #4a421c; }
.silk { fill: none; stroke: #00f4f4; }
.big text { font-family: "DejaVu Sans"; font-weight: 200; font-size: 24.500px; fill: #ff0; text-anchor: middle; }
.ref text { font-family: "Liberation Sans"; font-size: 9.500px; fill: #00f4f4; }
```
